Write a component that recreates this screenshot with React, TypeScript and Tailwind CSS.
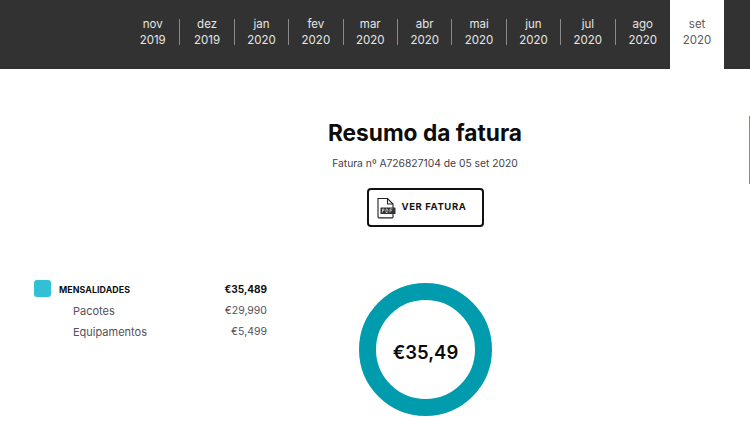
const months = [
  ["nov", "2019"],
  ["dez", "2019"],
  ["jan", "2020"],
  ["fev", "2020"],
  ["mar", "2020"],
  ["abr", "2020"],
  ["mai", "2020"],
  ["jun", "2020"],
  ["jul", "2020"],
  ["ago", "2020"],
  ["set", "2020"],
];

function MonthTab({ month, year, active, last }: { month: string; year: string; active: boolean; last: boolean }) {
  return (
    <div className={`w-[54.4px] h-full flex items-center justify-center pb-[5px] ${active ? "bg-white text-[#5a5a5a]" : "text-[#e6e6e6]"}`}>
      <div className={`w-full h-[26px] flex flex-col items-center justify-center text-[11.5px] leading-[16px] ${!active && !last ? "border-r border-[#8a8a8a]" : ""}`}>
        <span>{month}</span>
        <span>{year}</span>
      </div>
    </div>
  );
}

function PdfIcon() {
  return (
    <svg width="19" height="22" viewBox="0 0 19 22" fill="none" className="shrink-0">
      <path d="M1 1.5h9.5L16 7v13a.9.9 0 0 1-.9.9H1.9A.9.9 0 0 1 1 20V1.5z" stroke="#222" strokeWidth="1.1" fill="#fff" />
      <path d="M10.5 1.5V7H16" stroke="#222" strokeWidth="1.1" />
      <rect x="3.5" y="10.5" width="15" height="6.5" rx="0.5" fill="#333" />
      <path d="M5.5 12v3.5M5.5 12h1.5v1.5H5.5M9 12v3.5h1.2l.6-1v-1.5l-.6-1H9M13 12v3.5M13 12h2.5M13 13.6h2" stroke="#fff" strokeWidth="0.6" />
    </svg>
  );
}

function LineRow({ label, value }: { label: string; value: string }) {
  return (
    <div className="h-[20.5px] flex items-center justify-between pl-[39px] text-[#55505a]">
      <span className="text-[11px]">{label}</span>
      <span className="text-[10.5px]">{value}</span>
    </div>
  );
}

export default function App() {
  return (
    <div className="relative w-[750px] h-[426px] overflow-hidden bg-white font-['Inter',sans-serif]">
      <header className="h-[69px] bg-[#323232] flex pl-[126px]">
        {months.map(([m, y], i) => (
          <MonthTab key={m} month={m} year={y} active={m === "set"} last={i >= months.length - 2} />
        ))}
      </header>

      <section className="pl-[100px] flex flex-col items-center">
        <h1 className="mt-[50px] h-[28px] text-[22.7px] leading-[28px] font-bold text-[#0c0c0c]">Resumo da fatura</h1>
        <p className="mt-[8px] h-[16px] text-[10.3px] leading-[16px] text-[#45414a]">Fatura nº A726827104 de 05 set 2020</p>
        <button className="mt-[17px] w-[117px] h-[39px] border-2 border-[#111] rounded-[4px] flex items-center pl-[8px] gap-[6px] text-[9.5px] font-bold tracking-[0.6px] text-[#141414]">
          <PdfIcon />
          <span>VER FATURA</span>
        </button>
      </section>

      <section className="flex mt-[57px] pl-[34px]">
        <div className="w-[233px] mt-[-5px]">
          <div className="h-[21px] mb-[1px] flex items-center text-[#0e0e0e] font-bold">
            <span className="w-[17px] h-[17px] mt-[-2px] rounded-[3px] bg-[#32c0d6]" />
            <span className="ml-[8px] text-[8.8px] tracking-[0.1px]">MENSALIDADES</span>
            <span className="ml-auto text-[10px]">€35,489</span>
          </div>
          <LineRow label="Pacotes" value="€29,990" />
          <LineRow label="Equipamentos" value="€5,499" />
        </div>
        <div className="ml-[92px] mt-[-1px] w-[133px] h-[133px] rounded-full border-[17px] border-[#009cae] flex items-center justify-center">
          <span className="text-[18.5px] font-semibold text-[#0c0c0c] mt-[6px]">€35,49</span>
        </div>
      </section>

      <div className="absolute right-0 top-[116px] w-[1px] h-[68px] bg-[#8f8a84]" />
    </div>
  );
}
